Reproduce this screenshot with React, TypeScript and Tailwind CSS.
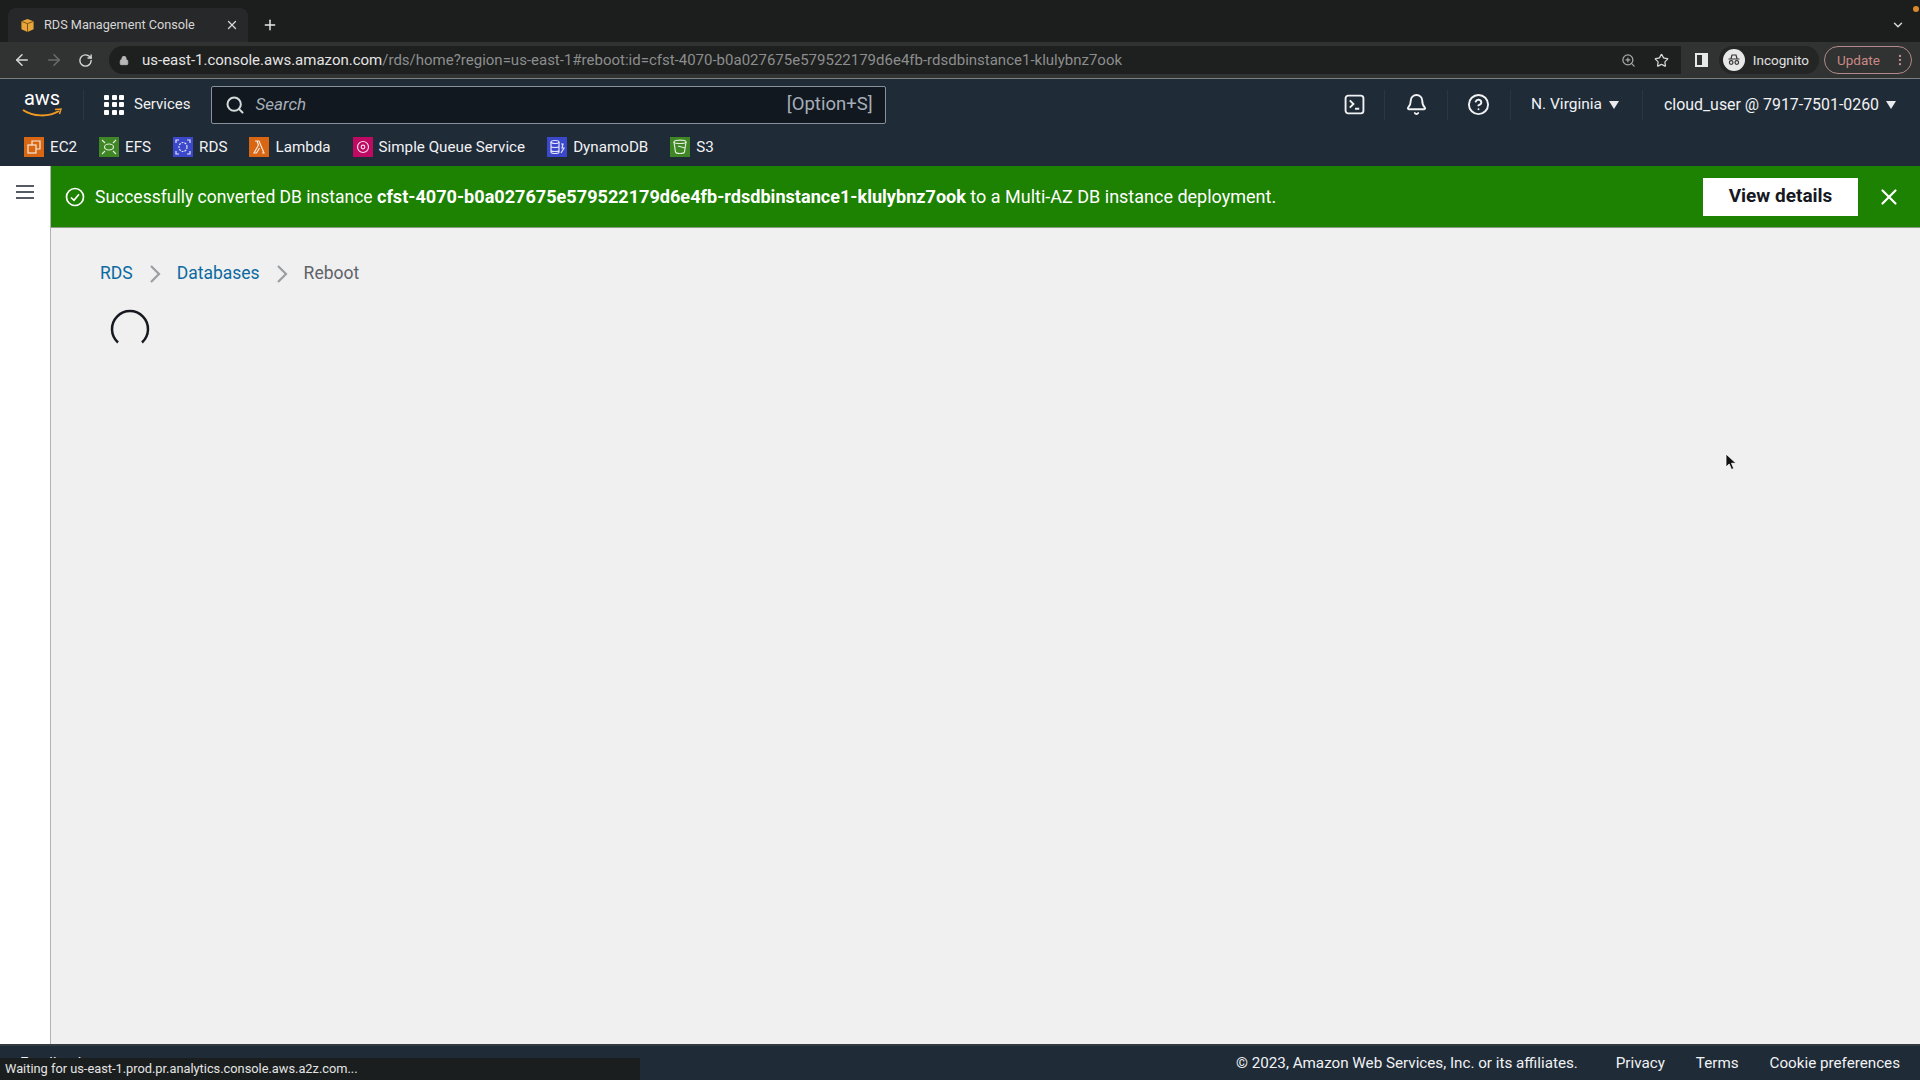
import { ArrowLeft, ArrowRight, Bell, CircleHelp, Lock, MoreVertical, Plus, RotateCw, Search, Star, X, ZoomIn, ChevronDown } from 'lucide-react';

const favorites = [
  { name: 'EC2', color: 'bg-[#d86613]', kind: 'ec2' },
  { name: 'EFS', color: 'bg-[#3f8624]', kind: 'efs' },
  { name: 'RDS', color: 'bg-[#3b48cc]', kind: 'rds' },
  { name: 'Lambda', color: 'bg-[#d86613]', kind: 'lambda' },
  { name: 'Simple Queue Service', color: 'bg-[#bf0a63]', kind: 'sqs' },
  { name: 'DynamoDB', color: 'bg-[#3b48cc]', kind: 'dynamo' },
  { name: 'S3', color: 'bg-[#3f8624]', kind: 's3' },
];

function FavGlyph({ kind }: { kind: string }) {
  return (
    <svg viewBox="0 0 20 20" className="w-5 h-5" fill="none" stroke="#fff" strokeWidth="1.2" opacity="0.85">
      {kind === 'ec2' && (
        <>
          <rect x="4" y="8" width="8" height="8" />
          <path d="M8 8V4h8v8h-4" />
        </>
      )}
      {kind === 'efs' && (
        <>
          <path d="M3 3l3 3M17 3l-3 3M3 17l3-3M17 17l-3-3" />
          <ellipse cx="10" cy="10" rx="4.5" ry="3" />
        </>
      )}
      {kind === 'rds' && (
        <>
          <path d="M3 6V3h3M14 3h3v3M3 14v3h3M17 14v3h-3" />
          <ellipse cx="10" cy="10" rx="4" ry="4.5" strokeDasharray="2 1" />
        </>
      )}
      {kind === 'lambda' && <path d="M5 16l4.5-8L8 4H6M8 4h2l5 12h-2M9.500 8L5 16h2.500l3-5" />}
      {kind === 'sqs' && (
        <>
          <circle cx="10" cy="10" r="5.500" />
          <circle cx="10" cy="10" r="1.800" />
        </>
      )}
      {kind === 'dynamo' && (
        <>
          <ellipse cx="8" cy="5" rx="4" ry="1.500" />
          <path d="M4 5v10c0 2 8 2 8 0V5M4 9c0 2 8 2 8 0M4 13c0 2 8 2 8 0M14 7h2l-1 4h2l-3 5" />
        </>
      )}
      {kind === 's3' && (
        <>
          <path d="M4 5c0-2.500 12-2.500 12 0l-1.500 10c-.5 2-8.500 2-9 0z" />
          <path d="M4 5c0 2 12 2 12 0M8 9l7 2" />
        </>
      )}
    </svg>
  );
}

function HeaderDivider() {
  return <div className="w-px h-[30px] bg-[#2b3644]" />;
}

function Caret() {
  return <span className="ml-[7px] w-0 h-0 border-x-[5px] border-x-transparent border-t-[8px] border-t-[#e8eaec]" />;
}

function Chevron() {
  return (
    <svg viewBox="0 0 14 20" className="mx-[15px] w-[14px] h-[20px]" fill="none" stroke="#9a9ea3" strokeWidth="2.200">
      <path d="M3 2l8 8-8 8" />
    </svg>
  );
}

export default function App() {
  return (
    <div className="relative w-full h-screen overflow-hidden flex flex-col bg-white font-['Roboto',sans-serif]">
      {/* browser tabs */}
      <div className="h-[42px] shrink-0 bg-[#1c1d1d] flex items-end pl-[8px] relative">
        <div className="w-[240px] h-[34px] rounded-t-lg bg-[#272829] flex items-center pl-[12px] pr-[9px]">
          <svg viewBox="0 0 16 16" className="w-[15px] h-[15px] shrink-0">
            <path d="M8 1l6.500 2.500V12L8 15 1.500 12V3.500z" fill="#e8a53a" />
            <path d="M8 6v9M1.500 3.500L8 6l6.500-2.500" stroke="#7a4f10" strokeWidth="1" fill="none" />
          </svg>
          <span className="ml-[9px] text-[12.700px] text-[#d6d6d6] leading-none whitespace-nowrap">RDS Management Console</span>
          <X className="ml-auto w-[14px] h-[14px] text-[#d8d8d8] shrink-0" strokeWidth={2.2} />
        </div>
        <Plus className="ml-[14px] mb-[9px] w-[16px] h-[16px] text-[#e8e8e8]" strokeWidth={2.2} />
        <ChevronDown className="ml-auto mr-[15px] mb-[10px] w-[14px] h-[14px] text-[#d8d8d8]" strokeWidth={2.5} />
        <span className="absolute right-[1px] top-[6px] w-[6px] h-[6px] rounded-full bg-[#d98a2b]" />
      </div>

      {/* browser toolbar */}
      <div className="h-[37px] shrink-0 bg-[#313232] border-b border-[#7b7d7e] flex items-center">
        <ArrowLeft className="ml-[13px] w-[18px] h-[18px] text-[#d8d8d8]" strokeWidth={2} />
        <ArrowRight className="ml-[14px] w-[18px] h-[18px] text-[#6a6b6b]" strokeWidth={2} />
        <RotateCw className="ml-[15px] w-[15px] h-[15px] text-[#d8d8d8]" strokeWidth={2.2} />
        <div className="ml-[16px] flex-1 h-[28px] rounded-l-full bg-[#1e1f1f] flex items-center pl-[10px]">
          <Lock className="w-[10px] h-[11px] text-[#b8b8b8] fill-[#b8b8b8]" />
          <span className="ml-[13px] text-[15px] leading-none whitespace-nowrap text-[#8c8e8e]">
            <span className="text-[#e4e4e4]">us-east-1.console.aws.amazon.com</span>
            /rds/home?region=us-east-1#reboot:id=cfst-4070-b0a027675e579522179d6e4fb-rdsdbinstance1-klulybnz7ook
          </span>
          <ZoomIn className="ml-auto w-[15px] h-[15px] text-[#a8a8a8]" />
          <Star className="ml-[18px] mr-[12px] w-[15px] h-[15px] text-[#d8d8d8]" />
        </div>
        <div className="w-[14px] h-[28px] bg-[#313232]" />
        <div className="w-[13px] h-[14px] border-2 border-[#e8e8e8] border-r-[6px]" />
        <div className="ml-[11px] h-[28px] rounded-full bg-[#242525] flex items-center pl-[4px] pr-[10px]">
          <div className="w-[22px] h-[22px] rounded-full bg-[#e8e8e8] flex items-center justify-center">
            <svg viewBox="0 0 16 16" className="w-[16px] h-[16px]" fill="none" stroke="#333" strokeWidth="1.200">
              <path d="M2.500 7h11M5 6.500l1-3.500h4l1 3.500" />
              <circle cx="5.200" cy="10.500" r="1.800" />
              <circle cx="10.800" cy="10.500" r="1.800" />
            </svg>
          </div>
          <span className="ml-[8px] text-[13.500px] text-[#e0e0e0]">Incognito</span>
        </div>
        <div className="ml-[5px] mr-[8px] w-[88px] h-[28px] rounded-full border border-[#b38a8c] flex items-center pl-[12px]">
          <span className="text-[13.500px] text-[#c98a85]">Update</span>
          <MoreVertical className="ml-auto mr-[4px] w-[14px] h-[14px] text-[#c58f8c]" />
        </div>
      </div>

      {/* aws console header */}
      <header className="h-[87px] shrink-0 bg-[#202b38] text-[#f0f2f3]">
        <div className="h-[47px] pt-[4px] flex items-center">
          <div className="ml-[22px] w-[40px] h-[34px] relative flex flex-col items-center">
            <span className="text-[20px] leading-[20px] font-normal text-white">aws</span>
            <svg viewBox="0 0 40 10" className="w-[40px] h-[10px]" fill="none">
              <path d="M1 2c10 7 26 7 36 1" stroke="#f29a1f" strokeWidth="2" />
              <path d="M33 1.500l6-.5-1.500 5" stroke="#f29a1f" strokeWidth="1.500" />
            </svg>
          </div>
          <div className="ml-[21px] w-px h-[30px] bg-[#2b3644]" />
          <div className="ml-[20px] grid grid-cols-3 gap-[2.500px] w-[20px]">
            {Array.from({ length: 9 }).map((_, i) => (
              <span key={i} className="w-[5px] h-[5px] bg-white rounded-[1px]" />
            ))}
          </div>
          <span className="ml-[10px] text-[15px]">Services</span>
          <div className="ml-[20px] w-[675px] h-[38px] bg-[#111820] border border-[#87919d] rounded-[2px] flex items-center pl-[14px] pr-[12px]">
            <Search className="w-[20px] h-[20px] text-[#d5dbdb] -ml-[1px]" strokeWidth={2.400} />
            <span className="ml-[11px] text-[17px] italic text-[#a6aeb7]">Search</span>
            <span className="ml-auto text-[18.500px] text-[#a6aeb7]">[Option+S]</span>
          </div>
          <div className="ml-auto flex items-center h-full pr-[24px]">
            <svg viewBox="0 0 20 20" className="w-[21px] h-[21px]" fill="none" stroke="#f0f2f3" strokeWidth="1.800">
              <rect x="1.500" y="1.500" width="17" height="17" rx="2.500" />
              <path d="M5.500 6l3.500 3.500L5.500 13M10.500 14h4" />
            </svg>
            <div className="ml-[19px]">
              <HeaderDivider />
            </div>
            <Bell className="ml-[20px] w-[23px] h-[23px]" strokeWidth={2} />
            <div className="ml-[19px]">
              <HeaderDivider />
            </div>
            <CircleHelp className="ml-[19px] w-[23px] h-[23px]" strokeWidth={2} />
            <div className="ml-[20px]">
              <HeaderDivider />
            </div>
            <span className="ml-[20px] text-[15.500px]">N. Virginia</span>
            <Caret />
            <div className="ml-[23px]">
              <HeaderDivider />
            </div>
            <span className="ml-[21px] text-[15.900px]">cloud_user @ 7917-7501-0260</span>
            <Caret />
          </div>
        </div>
        <div className="h-[40px] pt-[2px] flex items-center pl-[24px] gap-[22px]">
          {favorites.map((fav) => (
            <div key={fav.name} className="flex items-center gap-[6px]">
              <span className={`w-5 h-5 ${fav.color}`}>
                <FavGlyph kind={fav.kind} />
              </span>
              <span className="text-[15.200px]">{fav.name}</span>
            </div>
          ))}
        </div>
      </header>

      {/* page */}
      <div className="flex-1 min-h-0 flex">
        <aside className="w-[51px] shrink-0 bg-white border-r border-[#adb3b8] flex justify-center pt-[19px]">
          <div className="w-[18px] h-[14px] flex flex-col justify-between">
            <span className="h-[2px] bg-[#545b64]" />
            <span className="h-[2px] bg-[#545b64]" />
            <span className="h-[2px] bg-[#545b64]" />
          </div>
        </aside>
        <main className="flex-1 min-w-0 bg-[#f0f0f0] flex flex-col">
          <div className="h-[62px] shrink-0 bg-[#1d8102] border-b border-[#8a9a84] flex items-center pl-[14px] pr-[18px] text-white">
            <svg viewBox="0 0 20 20" className="w-[20px] h-[20px]" fill="none" stroke="#fff" strokeWidth="1.700">
              <circle cx="10" cy="10" r="8.500" />
              <path d="M6 10.500l3 2.800 5-6" />
            </svg>
            <p className="ml-[10px] text-[17.500px] whitespace-nowrap">
              Successfully converted DB instance{' '}
              <span className="font-bold text-[18.100px]">cfst-4070-b0a027675e579522179d6e4fb-rdsdbinstance1-klulybnz7ook</span>{' '}
              <span className="text-[18px]">to a Multi-AZ DB instance deployment.</span>
            </p>
            <button className="ml-auto w-[155px] h-[38px] bg-white text-[#16191f] font-bold text-[19px]">View details</button>
            <X className="ml-[18px] w-[26px] h-[26px]" strokeWidth={2} />
          </div>
          <div className="pl-[49px] pt-[35px]">
            <nav className="flex items-center text-[17.500px] h-[21px]">
              <span className="text-[#0b6aa1]">RDS</span>
              <Chevron />
              <span className="text-[#0b6aa1]">Databases</span>
              <Chevron />
              <span className="text-[#5f6369]">Reboot</span>
            </nav>
            <svg viewBox="0 0 40 40" className="ml-[10px] mt-[25px] w-[40px] h-[40px]" fill="none">
              <path d="M8 33.500A18 18 0 1 1 32 33.500" stroke="#16191f" strokeWidth="2.500" />
            </svg>
          </div>
        </main>
      </div>

      {/* footer */}
      <footer className="h-[36px] shrink-0 bg-[#202b38] border-t-2 border-[#323a42] flex items-center pl-[20px] pr-[20px] text-[15.200px] text-[#f0f2f3]">
        <span>Feedback</span>
        <span className="ml-auto">© 2023, Amazon Web Services, Inc. or its affiliates.</span>
        <span className="ml-[38px]">Privacy</span>
        <span className="ml-[31px]">Terms</span>
        <span className="ml-[31px]">Cookie preferences</span>
      </footer>

      {/* chrome status bubble */}
      <div className="absolute left-0 bottom-0 w-[640px] h-[22px] bg-[#1b1e1f] flex items-center pl-[5px] text-[12.800px] text-[#e4e4e4]">
        Waiting for us-east-1.prod.pr.analytics.console.aws.a2z.com...
      </div>

      {/* mouse pointer */}
      <svg viewBox="0 0 12 18" className="absolute left-[1725px] top-[453px] w-[12px] h-[18px]">
        <path d="M1 1v13l3.200-3 2.300 5.500 2.300-1-2.300-5.200H11z" fill="#111" stroke="#fff" strokeWidth="0.800" />
      </svg>
    </div>
  );
}
